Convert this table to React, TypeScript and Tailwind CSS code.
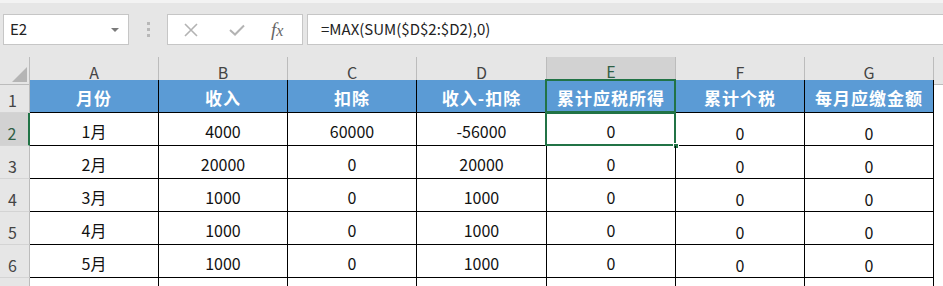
import React from "react";

const columns = ["A", "B", "C", "D", "E", "F", "G"];

const headers = ["月份", "收入", "扣除", "收入-扣除", "累计应税所得", "累计个税", "每月应缴金额"];

const rows = [
  ["1月", "4000", "60000", "-56000", "0", "0", "0"],
  ["2月", "20000", "0", "20000", "0", "0", "0"],
  ["3月", "1000", "0", "1000", "0", "0", "0"],
  ["4月", "1000", "0", "1000", "0", "0", "0"],
  ["5月", "1000", "0", "1000", "0", "0", "0"],
];

const gridCols = "grid grid-cols-[30px_129px_129px_129px_130px_129px_129px_129px_1fr]";

function FormulaBar() {
  return (
    <div className="h-[57px] bg-[#e6e6e6] border-t-[3px] border-[#f3f3f3] flex items-start pt-[11px] pl-[3px]">
      <div className="w-[126px] h-[31px] bg-white border border-[#c6c6c6] flex items-center justify-between pl-[6px] pr-[9px]">
        <span className="text-[15px] text-[#222]">E2</span>
        <span className="w-0 h-0 border-l-[4px] border-r-[4px] border-t-[4px] border-l-transparent border-r-transparent border-t-[#7a7a7a]" />
      </div>
      <div className="ml-[18px] w-[3px] h-[31px] flex flex-col items-center justify-center gap-[3px]">
        <span className="w-[3px] h-[3px] bg-[#b8b8b8]" />
        <span className="w-[3px] h-[3px] bg-[#b8b8b8]" />
        <span className="w-[3px] h-[3px] bg-[#b8b8b8]" />
      </div>
      <div className="ml-[17px] w-[136px] h-[31px] bg-white border border-[#c6c6c6] flex items-center">
        <svg width="14" height="14" viewBox="0 0 14 14" className="ml-[16px]">
          <path d="M1 1 L13 13 M13 1 L1 13" stroke="#b3b3b3" strokeWidth="1.6" fill="none" />
        </svg>
        <svg width="16" height="12" viewBox="0 0 16 12" className="ml-[31px]">
          <path d="M1 6 L6 10.5 L15 1.5" stroke="#b3b3b3" strokeWidth="2" fill="none" />
        </svg>
        <span className="ml-[26px] font-['Liberation_Serif',serif] italic text-[19px] leading-none text-[#666]">
          f<span className="text-[16px]">x</span>
        </span>
      </div>
      <div className="ml-[4px] flex-1 h-[31px] bg-white border border-r-0 border-[#c6c6c6] flex items-center pl-[13px]">
        <span className="text-[15px] text-[#222]">=MAX(SUM($D$2:$D2),0)</span>
      </div>
    </div>
  );
}

function ColumnHeaders() {
  return (
    <div className={`${gridCols} h-[23px]`}>
      <div className="relative bg-[#e6e6e6] border-r border-b border-[#bcbcbc]">
        <svg width="15" height="15" viewBox="0 0 15 15" className="absolute right-[2px] bottom-[2px]">
          <polygon points="15,0 15,15 0,15" fill="#b5b5b5" />
        </svg>
      </div>
      {columns.map((c) => (
        <div
          key={c}
          className={
            c === "E"
              ? "bg-[#d2d2d2] border-r border-[#bcbcbc] border-b-2 border-b-[#217346] flex items-center justify-center pt-[2px] text-[16px] text-[#2f5f45]"
              : "bg-[#e6e6e6] border-r border-b border-[#bcbcbc] flex items-center justify-center pt-[2px] text-[16px] text-[#444]"
          }
        >
          {c}
        </div>
      ))}
      <div className="bg-[#e6e6e6] border-b border-[#bcbcbc]" />
    </div>
  );
}

function RowHeader({ n, active }: { n?: number; active?: boolean }) {
  return (
    <div
      className={
        active
          ? "bg-[#d2d2d2] border-r-2 border-r-[#217346] border-b border-b-[#d4d4d4] flex items-end justify-center pb-[1px] pr-[4px] text-[16px] leading-[22px] text-[#2f5f45]"
          : "bg-[#e6e6e6] border-r border-r-[#bcbcbc] border-b border-b-[#d4d4d4] flex items-end justify-center pb-[1px] pr-[4px] text-[16px] leading-[22px] text-[#444]"
      }
    >
      {n}
    </div>
  );
}

export default function App() {
  return (
    <div className="w-[943px] h-[286px] overflow-hidden bg-white font-['Noto_Sans_CJK_SC',sans-serif]">
      <FormulaBar />
      <ColumnHeaders />

      {/* header row */}
      <div className={`${gridCols} h-[33px]`}>
        <RowHeader n={1} />
        {headers.map((h, i) => (
          <div
            key={h}
            className="relative bg-[#5b9bd5] border-r border-b border-black flex items-center justify-center pt-[3px] text-[17px] font-bold tracking-[1px] text-white"
          >
            {h}
            {i === 4 && (
              <span className="absolute -left-[2px] -top-[1px] -right-[1px] -bottom-[1px] border-2 border-[#217346]" />
            )}
          </div>
        ))}
        <div />
      </div>

      {rows.map((r, ri) => (
        <div key={ri} className={`${gridCols} h-[33px]`}>
          <RowHeader n={ri + 2} active={ri === 0} />
          {r.map((v, ci) => (
            <div
              key={ci}
              className={
                ci >= 5
                  ? "border-r border-b border-black flex items-end justify-center pb-0 text-[16px] text-[#111]"
                  : "relative border-r border-b border-black flex items-center justify-center pt-[4px] text-[16px] text-[#111]"
              }
            >
              {v}
              {ri === 0 && ci === 4 && (
                <>
                  <span className="absolute -left-[2px] -top-[1px] -right-[1px] -bottom-[1px] border-2 border-[#217346]" />
                  <span className="absolute -right-[4px] -bottom-[4px] w-[6px] h-[6px] bg-[#217346] border border-white" />
                </>
              )}
            </div>
          ))}
          <div />
        </div>
      ))}

      {/* next row, cut off by the window */}
      <div className={`${gridCols} h-[33px]`}>
        <RowHeader />
        {columns.map((c) => (
          <div key={c} className="border-r border-black" />
        ))}
        <div />
      </div>
    </div>
  );
}
